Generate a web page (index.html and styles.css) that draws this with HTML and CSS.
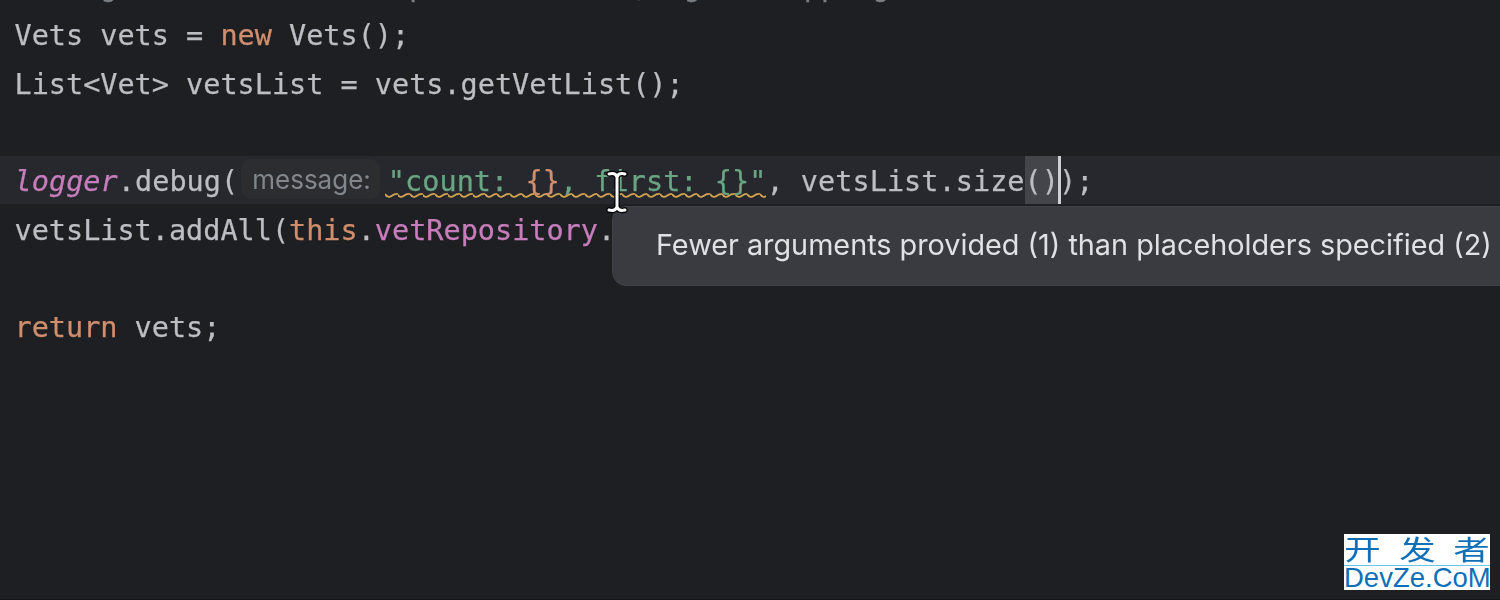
FILE: index.html
```html
<!DOCTYPE html>
<html lang="en">
<head>
<meta charset="utf-8">
<title>Editor</title>
<link rel="stylesheet" href="styles.css">
</head>
<body>
<main class="editor">
  <div class="code">
    <div class="line comment-line"><span class="comment">// Logs the vet record parts handled, again mapping</span></div>
    <div class="line">Vets vets = <span class="kw">new</span> Vets();</div>
    <div class="line">List&lt;Vet&gt; vetsList = vets.getVetList();</div>
    <div class="line"></div>
    <div class="line current"><span class="field italic">logger</span>.debug(<span class="inlay">message:</span><span class="squiggle"><span class="str">"count: <span class="kw">{}</span>, first: {}"</span></span>, vetsList.size<span class="match">()</span><span class="caret-host"><span class="caret"></span></span>);</div>
    <div class="line">vetsList.addAll(<span class="kw">this</span>.<span class="field">vetRepository</span>.</div>
    <div class="line"></div>
    <div class="line"><span class="kw">return</span> vets;</div>
  </div>

  <div class="tooltip">Fewer arguments provided (1) than placeholders specified (2)</div>

  <svg class="ibeam" width="24" height="44" viewBox="0 0 24 44" aria-hidden="true">
    <path class="ibeam-o" d="M4 4 C8 3 11 4 12 7 L12 37 C11 40 8 41 4 40 M20 4 C16 3 13 4 12 7 M12 37 C13 40 16 41 20 40"/>
    <path class="ibeam-i" d="M4 4 C8 3 11 4 12 7 L12 37 C11 40 8 41 4 40 M20 4 C16 3 13 4 12 7 M12 37 C13 40 16 41 20 40"/>
  </svg>

  <aside class="badge">
    <div class="badge-cn"><span>开</span><span>发</span><span>者</span></div>
    <div class="badge-en">DevZe.CoM</div>
  </aside>
</main>
</body>
</html>
```

FILE: styles.css
```css
* { box-sizing: border-box; }

html, body {
  margin: 0;
  height: 100%;
  background: #1e1f22;
}

.editor {
  position: relative;
  width: 1500px;
  height: 600px;
  overflow: hidden;
  background: #1e1f22;
  border-bottom: 1px solid #131416;
}

.code {
  margin-top: -36.6px;
  font-family: "DejaVu Sans Mono", "Liberation Mono", monospace;
  font-size: 28.5px;
  line-height: 48.7px;
  color: #bcbec4;
  -webkit-text-stroke: 0.25px;
  filter: blur(0.35px);
}

.line {
  height: 48.7px;
  padding-left: 14.5px;
  white-space: pre;
}

.current {
  height: 48px;
  margin-top: -1.7px;
  margin-bottom: 2.4px;
  padding-top: 1.7px;
  background: #26282e;
  letter-spacing: 0.05px;
}

.comment { color: #7a7e85; }
.kw { color: #cf8e6d; }
.field { color: #c77dbb; }
.italic { font-style: italic; }
.str { color: #6aa583; }

.inlay {
  display: inline-block;
  margin: 0 8px 0 3px;
  padding: 0 9px 0 11px;
  height: 40px;
  line-height: 42px;
  vertical-align: 2px;
  border-radius: 10px;
  background: #2b2d30;
  color: #82868d;
  font-family: Inter, "Liberation Sans", sans-serif;
  font-size: 26px;
  letter-spacing: 0;
  -webkit-text-stroke: 0;
}

.squiggle {
  margin-left: -3px;
  padding-left: 3px;
  padding-bottom: 1px;
  background: url("data:image/svg+xml,%3Csvg xmlns='http://www.w3.org/2000/svg' width='12.5' height='6'%3E%3Cpath d='M0 1 Q3.1 5.5 6.25 3 T12.5 1' fill='none' stroke='%23d2a44f' stroke-width='1.7'/%3E%3C/svg%3E") repeat-x left bottom / 12.5px 6px;
}

.match {
  display: inline-block;
  height: 48px;
  margin-top: -1.7px;
  padding-top: 1.7px;
  background: #43454a;
}

.caret-host {
  position: relative;
  display: inline-block;
  width: 0;
  height: 48px;
  vertical-align: top;
}

.caret {
  position: absolute;
  left: -1px;
  top: -1.7px;
  width: 3px;
  height: 48px;
  background: #ced0d6;
}

.ibeam {
  position: absolute;
  left: 605px;
  top: 170px;
}

.ibeam path { fill: none; stroke-linecap: round; }
.ibeam-o { stroke: #000; stroke-width: 5.5; }
.ibeam-i { stroke: #fff; stroke-width: 3; }

.tooltip {
  position: absolute;
  left: 612px;
  top: 206px;
  width: 920px;
  height: 80px;
  padding-left: 43px;
  border: 1px solid #3f4146;
  border-radius: 14px;
  background: #393b40;
  color: #dfe1e5;
  font-family: Inter, "Liberation Sans", sans-serif;
  font-size: 28.8px;
  line-height: 76px;
  white-space: nowrap;
  filter: blur(0.3px);
}

.badge {
  position: absolute;
  left: 1344px;
  top: 534px;
  width: 146px;
  height: 56px;
  background: #fff;
  color: #0f6fb9;
  display: flex;
  flex-direction: column;
}

.badge-cn {
  height: 32px;
  display: flex;
  justify-content: space-between;
  padding: 0 5px;
  font-family: "Noto Sans CJK SC", sans-serif;
  font-size: 27px;
  line-height: 30px;
  border-bottom: 1px solid #6ec6ee;
  overflow: hidden;
}

.badge-cn span {
  transform: scaleX(1.35);
}

.badge-en {
  font-family: "Liberation Sans", sans-serif;
  font-size: 27.5px;
  line-height: 24px;
  text-align: center;
  white-space: nowrap;
}
```
